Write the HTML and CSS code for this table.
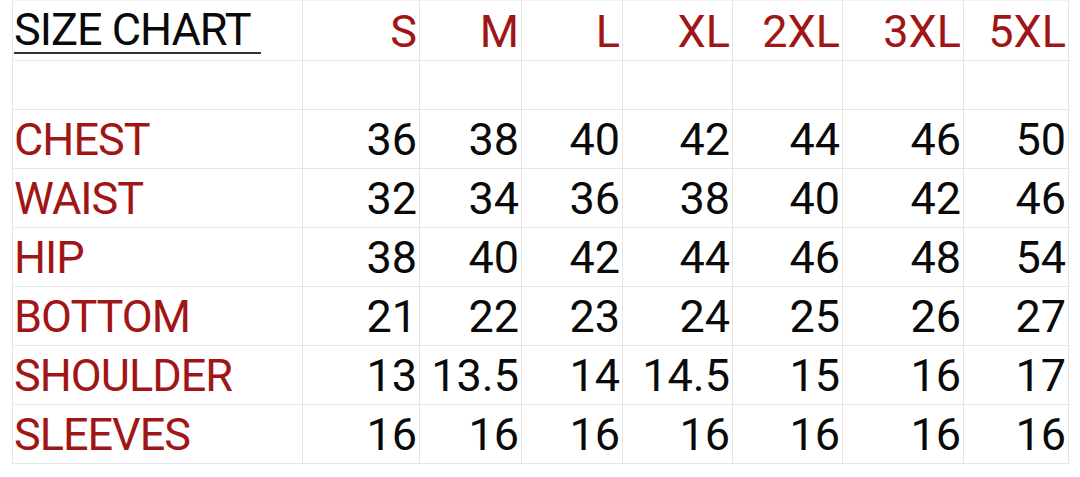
FILE: index.html
```html
<!DOCTYPE html>
<html>
<head>
<meta charset="utf-8">
<link rel="stylesheet" href="styles.css">
</head>
<body>
<table class="chart">
  <colgroup>
    <col class="c-label"><col class="c-s"><col class="c-m"><col class="c-l"><col class="c-xl"><col class="c-2xl"><col class="c-3xl"><col class="c-5xl">
  </colgroup>
  <tr class="head">
    <td class="title"><span class="title-text">SIZE CHART&nbsp;</span></td>
    <td class="size">S</td><td class="size">M</td><td class="size">L</td><td class="size">XL</td><td class="size">2XL</td><td class="size">3XL</td><td class="size">5XL</td>
  </tr>
  <tr class="spacer"><td></td><td></td><td></td><td></td><td></td><td></td><td></td><td></td></tr>
  <tr class="row"><td class="label">CHEST</td><td>36</td><td>38</td><td>40</td><td>42</td><td>44</td><td>46</td><td>50</td></tr>
  <tr class="row"><td class="label">WAIST</td><td>32</td><td>34</td><td>36</td><td>38</td><td>40</td><td>42</td><td>46</td></tr>
  <tr class="row"><td class="label">HIP</td><td>38</td><td>40</td><td>42</td><td>44</td><td>46</td><td>48</td><td>54</td></tr>
  <tr class="row"><td class="label">BOTTOM</td><td>21</td><td>22</td><td>23</td><td>24</td><td>25</td><td>26</td><td>27</td></tr>
  <tr class="row"><td class="label">SHOULDER</td><td>13</td><td>13.5</td><td>14</td><td>14.5</td><td>15</td><td>16</td><td>17</td></tr>
  <tr class="row"><td class="label">SLEEVES</td><td>16</td><td>16</td><td>16</td><td>16</td><td>16</td><td>16</td><td>16</td></tr>
</table>
</body>
</html>
```
FILE: styles.css
```css
html, body {
  margin: 0;
  padding: 0;
  background: #ffffff;
}
body {
  padding: 0 0 0 12px;
  font-family: Roboto, "Liberation Sans", sans-serif;
}
.chart {
  border-collapse: collapse;
  table-layout: fixed;
  width: 1056px;
  font-size: 45px;
  line-height: 45px;
  color: #0a0a0a;
}
.c-label { width: 290px; }
.c-s { width: 117px; }
.c-m { width: 102px; }
.c-l { width: 101px; }
.c-xl { width: 110px; }
.c-2xl { width: 110px; }
.c-3xl { width: 121px; }
.c-5xl { width: 105px; }
.chart td {
  border: 1px solid #e6e6e6;
  padding: 0 2px 6px 1px;
  vertical-align: bottom;
  text-align: right;
  white-space: nowrap;
  overflow: visible;
}
.chart .head td {
  height: 53px;
  border-top-color: #f2f2f2;
}
.chart .spacer td {
  height: 48px;
  padding: 0;
}
.chart .row td {
  height: 52px;
}
.chart td.label,
.chart td.title {
  text-align: left;
  letter-spacing: -1px;
  color: #a01616;
}
.chart td.title {
  color: #0a0a0a;
}
.title-text {
  display: inline-block;
  border-bottom: 2px solid #333333;
  padding-bottom: 0;
}
.chart td.size {
  color: #a01616;
}
```
